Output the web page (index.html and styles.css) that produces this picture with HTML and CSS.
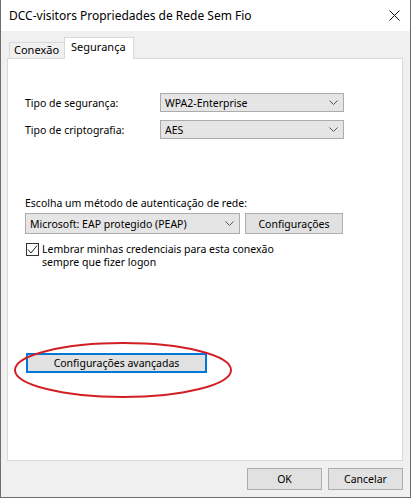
FILE: index.html
```html
<!DOCTYPE html>
<html lang="pt-BR">
<head>
    <meta charset="UTF-8">
    <meta name="viewport" content="width=device-width, initial-scale=1.0">
    <title>DCC-visitors Propriedades de Rede Sem Fio</title>
    <link rel="stylesheet" href="styles.css">
</head>
<body>
    <!-- Janela de propriedades -->
    <div class="window">
        <div class="titlebar">
            <span class="title">DCC-visitors Propriedades de Rede Sem Fio</span>
            <svg class="close" width="11" height="11" viewBox="0 0 11 11">
                <path d="M0.5 0.5 L10.5 10.5 M10.5 0.5 L0.5 10.5" stroke="#111" stroke-width="1" fill="none"/>
            </svg>
        </div>

        <div class="content">
            <!-- Abas -->
            <div class="tabs">
                <div class="tab">Conexão</div>
                <div class="tab active">Segurança</div>
            </div>

            <!-- Painel da aba Segurança -->
            <div class="panel">
                <div class="field">
                    <label>Tipo de segurança:</label>
                    <div class="combo wide">
                        <span>WPA2-Enterprise</span>
                        <svg width="9" height="5" viewBox="0 0 9 5"><polyline points="0.5,0.5 4.5,4.5 8.5,0.5" stroke="#555" fill="none"/></svg>
                    </div>
                </div>
                <div class="field">
                    <label>Tipo de criptografia:</label>
                    <div class="combo wide">
                        <span>AES</span>
                        <svg width="9" height="5" viewBox="0 0 9 5"><polyline points="0.5,0.5 4.5,4.5 8.5,0.5" stroke="#555" fill="none"/></svg>
                    </div>
                </div>

                <div class="auth">
                    <div class="auth-label">Escolha um método de autenticação de rede:</div>
                    <div class="auth-row">
                        <div class="combo method">
                            <span>Microsoft: EAP protegido (PEAP)</span>
                            <svg width="9" height="5" viewBox="0 0 9 5"><polyline points="0.5,0.5 4.5,4.5 8.5,0.5" stroke="#555" fill="none"/></svg>
                        </div>
                        <button class="btn settings">Configurações</button>
                    </div>
                    <div class="check-row">
                        <span class="checkbox">
                            <svg width="11" height="11" viewBox="0 0 11 11"><polyline points="1,5.5 4,9 10,1.5" stroke="#222" stroke-width="1" fill="none"/></svg>
                        </span>
                        <span class="check-text">Lembrar minhas credenciais para esta conexão<br>sempre que fizer logon</span>
                    </div>
                </div>

                <button class="btn advanced">Configurações avançadas</button>
            </div>

            <!-- Botões do rodapé -->
            <div class="footer">
                <button class="btn footer-btn">OK</button>
                <button class="btn footer-btn">Cancelar</button>
            </div>
        </div>

        <!-- Marcação em vermelho sobre o botão -->
        <svg class="mark" width="224" height="62" viewBox="0 0 224 62">
            <ellipse cx="112" cy="31" rx="108" ry="27" stroke="#d21f26" stroke-width="2" fill="none"/>
        </svg>
    </div>
</body>
</html>
```

FILE: styles.css
```css
/* Base */
body {
    margin: 0;
    background: #fff;
    font-family: "Noto Sans", "Open Sans", sans-serif;
    font-size: 10.5px;
    color: #000;
}

/* Janela */
.window {
    position: relative;
    width: 411px;
    height: 498px;
    box-sizing: border-box;
    border: 1px solid #6e6e6e;
    border-top: none;
    background: #f0f0f0;
    display: flex;
    flex-direction: column;
}

.titlebar {
    height: 31px;
    background: #fff;
    display: flex;
    align-items: center;
    justify-content: space-between;
    padding: 0 10px 0 8px;
    flex-shrink: 0;
}

.title {
    font-size: 12px;
}

.content {
    flex: 1;
    display: flex;
    flex-direction: column;
    padding: 7px 7px 0 6px;
}

/* Abas */
.tabs {
    height: 20px;
    display: flex;
    align-items: flex-end;
    padding-left: 2px;
}

.tab {
    height: 15px;
    line-height: 14px;
    padding: 0 5px 0 4px;
    border: 1px solid #d9d9d9;
    border-bottom: none;
    border-right: none;
    background: #f0f0f0;
    font-size: 11px;
}

.tab.active {
    height: 21px;
    line-height: 18px;
    margin-bottom: -1px;
    padding: 0 7px 0 6px;
    border-right: 1px solid #d9d9d9;
    background: #fff;
    position: relative;
    z-index: 1;
}

/* Painel */
.panel {
    flex: 1;
    background: #fff;
    border: 1px solid #d9d9d9;
    padding: 34px 17px 0 17px;
    display: flex;
    flex-direction: column;
}

.field {
    display: flex;
    align-items: center;
    margin-bottom: 8px;
}

.field label {
    width: 135px;
}

.combo {
    height: 19px;
    box-sizing: border-box;
    border: 1px solid #acacac;
    background: #e5e5e5;
    display: flex;
    align-items: center;
    justify-content: space-between;
    padding: 0 5px 0 4px;
}

.combo.wide {
    width: 184px;
}

.combo.method {
    width: 215px;
    height: 21px;
}

.auth {
    margin-top: 49px;
}

.auth-row {
    display: flex;
    gap: 5px;
    margin-top: 3px;
}

.btn {
    font-family: inherit;
    font-size: 10.5px;
    color: #000;
    background: #e1e1e1;
    border: 1px solid #adadad;
    padding: 0;
    box-sizing: border-box;
}

.btn.settings {
    width: 98px;
    height: 21px;
}

.check-row {
    display: flex;
    align-items: flex-start;
    margin-top: 9px;
    margin-left: 1px;
}

.checkbox {
    width: 13px;
    height: 13px;
    box-sizing: border-box;
    border: 1px solid #333;
    display: flex;
    align-items: center;
    justify-content: center;
    margin-right: 3px;
}

.check-text {
    line-height: 13px;
}

.btn.advanced {
    width: 181px;
    height: 20px;
    margin-top: 84px;
    margin-left: 1px;
    border: 2px solid #0078d7;
}

/* Rodapé */
.footer {
    height: 36px;
    display: flex;
    justify-content: flex-end;
    align-items: flex-start;
    gap: 6px;
    padding-top: 7px;
    box-sizing: border-box;
}

.footer-btn {
    width: 75px;
    height: 22px;
}

/* Marca vermelha */
.mark {
    position: absolute;
    left: 10px;
    top: 339px;
}
```
